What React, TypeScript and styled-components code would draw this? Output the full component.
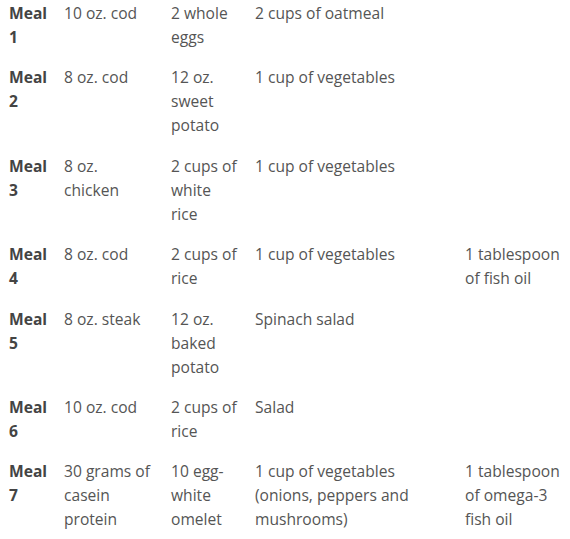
import React from "react";
import styled, { createGlobalStyle } from "styled-components";

const Global = createGlobalStyle`
  html, body { margin: 0; padding: 0; background: #ffffff; }
  body { font-family: "Open Sans", "Liberation Sans", sans-serif; }
`;

const Page = styled.div`
  width: 570px;
  height: 539px;
  overflow: hidden;
  padding-left: 9px;
  box-sizing: border-box;
`;

const Table = styled.table`
  border-collapse: collapse;
  table-layout: fixed;
  width: 581px;
  margin-top: -7px;
  font-size: 15.6px;
  line-height: 24px;
  color: #555555;
`;

const Col = styled.col<{ $w: number }>`
  width: ${(p) => p.$w}px;
`;

const Cell = styled.td`
  padding: 8px 16px 8.4px 0;
  vertical-align: top;
  text-align: left;
`;

const Label = styled(Cell)`
  font-weight: 700;
  color: #444444;
`;

type Meal = { n: number; cells: string[] };

const meals: Meal[] = [
  { n: 1, cells: ["10 oz. cod", "2 whole eggs", "2 cups of oatmeal", ""] },
  { n: 2, cells: ["8 oz. cod", "12 oz. sweet potato", "1 cup of vegetables", ""] },
  { n: 3, cells: ["8 oz. chicken", "2 cups of white rice", "1 cup of vegetables", ""] },
  { n: 4, cells: ["8 oz. cod", "2 cups of rice", "1 cup of vegetables", "1 tablespoon of fish oil"] },
  { n: 5, cells: ["8 oz. steak", "12 oz. baked potato", "Spinach salad", ""] },
  { n: 6, cells: ["10 oz. cod", "2 cups of rice", "Salad", ""] },
  {
    n: 7,
    cells: [
      "30 grams of casein protein",
      "10 egg-white omelet",
      "1 cup of vegetables (onions, peppers and mushrooms)",
      "1 tablespoon of omega-3 fish oil",
    ],
  },
];

export default function App() {
  return (
    <Page>
      <Global />
      <Table>
        <colgroup>
          <Col $w={55} />
          <Col $w={107} />
          <Col $w={84} />
          <Col $w={210} />
          <Col $w={125} />
        </colgroup>
        <tbody>
          {meals.map((m) => (
            <tr key={m.n}>
              <Label>Meal {m.n}</Label>
              {m.cells.map((c, i) => (
                <Cell key={i}>{c}</Cell>
              ))}
            </tr>
          ))}
        </tbody>
      </Table>
    </Page>
  );
}
